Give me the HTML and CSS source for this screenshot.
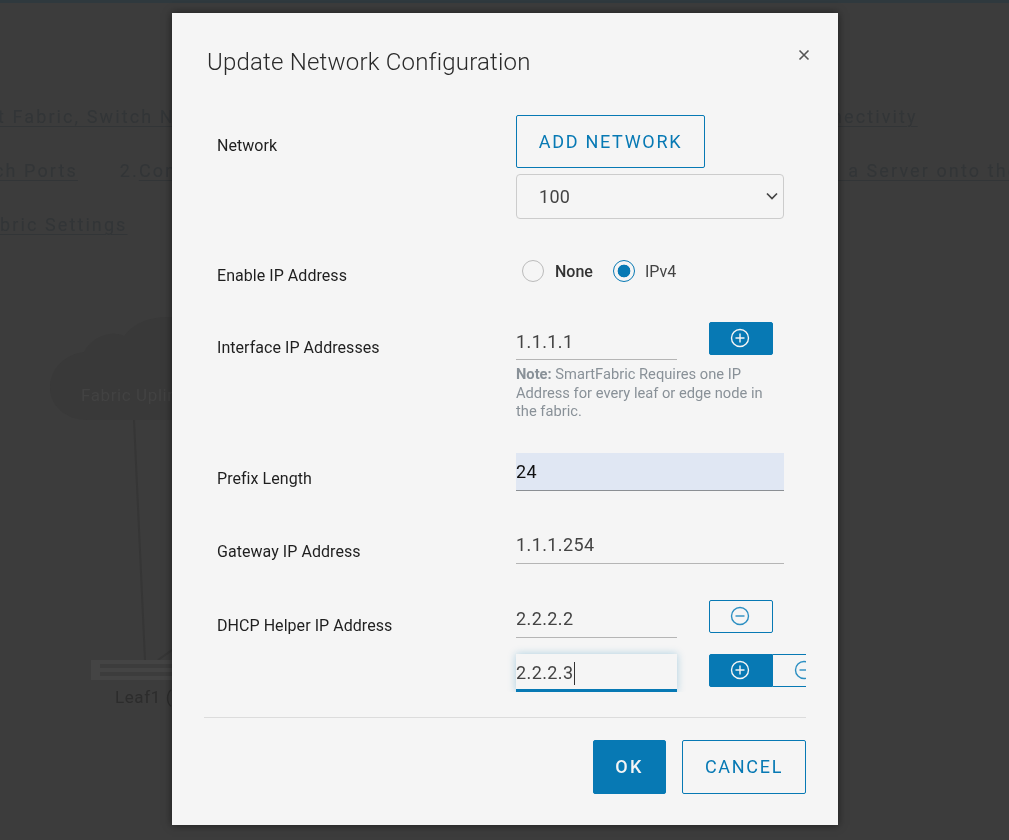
FILE: index.html
```html
<!DOCTYPE html>
<html lang="en">
<head>
<meta charset="utf-8">
<title>Update Network Configuration</title>
<link rel="stylesheet" href="styles.css">
</head>
<body>
<div class="page">
  <div class="topbar"></div>
  <div class="steps">
    <div class="step-row"><span class="step-left step-left-1"><a class="step">t Fabric, Switch Name and Connectivity</a></span><a class="step step-right-1">nectivity</a></div>
    <div class="step-row"><span class="step-left step-left-2"><a class="step">ch Ports</a><span class="step-num">2.</span><a class="step">Configure</a></span><a class="step step-right-2">&nbsp;&nbsp;a Server onto the Network</a></div>
    <div class="step-row"><span class="step-left"><a class="step">bric Settings</a></span></div>
  </div>
  <svg class="topology" width="172" height="840" viewBox="0 0 172 840" aria-hidden="true">
    <path class="cloud" d="M88 420 C64 420 50 404 50 388 C50 368 66 354 84 352 C92 336 112 330 124 336 C134 322 152 316 172 317 L172 420 Z"/>
    <path class="link" d="M134 420 L145 660"/>
    <path class="link" d="M158 660 L172 650"/>
    <rect class="switch" x="91" y="660" width="81" height="20"/>
    <path class="switch-line" d="M100 666 H172 M100 674 H172"/>
    <text class="cloud-label" x="81" y="401">Fabric Uplink</text>
    <text class="leaf-label" x="115" y="703">Leaf1 (L</text>
  </svg>

  <section class="modal">
    <header class="modal-head">
      <h1 class="modal-title">Update Network Configuration</h1>
      <svg class="close" width="12" height="12" viewBox="0 0 12 12" aria-label="Close"><path d="M1.5 1.5 L10.5 10.5 M10.5 1.5 L1.5 10.5"/></svg>
    </header>

    <form class="form">
      <div class="row row-network">
        <label class="label label-network">Network</label>
        <div class="stack-network">
          <button type="button" class="btn btn-outline btn-add-network">ADD NETWORK</button>
          <div class="select-wrap">
            <select class="select"><option>100</option></select>
            <svg class="select-arrow" width="12" height="8" viewBox="0 0 12 8"><path d="M1 1.5 L6 6.5 L11 1.5"/></svg>
          </div>
        </div>
      </div>

      <div class="row row-radio">
        <label class="label label-radio">Enable IP Address</label>
        <div class="radios">
          <label class="radio-item"><input class="radio" type="radio" name="ip"><span class="radio-none">None</span></label>
          <label class="radio-item radio-item-ip"><input class="radio" type="radio" name="ip" checked><span>IPv4</span></label>
        </div>
      </div>

      <div class="row row-interface">
        <label class="label">Interface IP Addresses</label>
        <div>
          <div class="field-line">
            <input class="input input-short" value="1.1.1.1">
            <button type="button" class="icon-btn icon-btn-solid">
              <svg class="icon" width="20" height="20" viewBox="0 0 20 20"><circle cx="10" cy="10" r="8.5"/><path d="M10 5.5 V14.5 M5.5 10 H14.5"/></svg>
            </button>
          </div>
          <p class="note"><b class="note-key">Note:</b> SmartFabric Requires one IP Address for every leaf or edge node in the fabric.</p>
        </div>
      </div>

      <div class="row row-prefix">
        <label class="label">Prefix Length</label>
        <input class="input input-long input-filled" value="24">
      </div>

      <div class="row row-gateway">
        <label class="label">Gateway IP Address</label>
        <input class="input input-long" value="1.1.1.254">
      </div>

      <div class="row row-dhcp">
        <label class="label">DHCP Helper IP Address</label>
        <div class="dhcp-stack">
          <div class="field-line">
            <input class="input input-short" value="2.2.2.2">
            <button type="button" class="icon-btn icon-btn-outline">
              <svg class="icon" width="20" height="20" viewBox="0 0 20 20"><circle cx="10" cy="10" r="8.5"/><path d="M5.5 10 H14.5"/></svg>
            </button>
          </div>
          <div class="field-line">
            <div class="input input-short input-focus">2.2.2.3<span class="caret"></span></div>
            <div class="btn-group">
              <button type="button" class="icon-btn icon-btn-solid icon-btn-first">
                <svg class="icon" width="20" height="20" viewBox="0 0 20 20"><circle cx="10" cy="10" r="8.5"/><path d="M10 5.5 V14.5 M5.5 10 H14.5"/></svg>
              </button>
              <button type="button" class="icon-btn icon-btn-outline icon-btn-last">
                <svg class="icon" width="20" height="20" viewBox="0 0 20 20"><circle cx="10" cy="10" r="8.5"/><path d="M5.5 10 H14.5"/></svg>
              </button>
            </div>
          </div>
        </div>
      </div>
    </form>

    <footer class="modal-foot">
      <button type="button" class="btn btn-solid btn-ok">OK</button>
      <button type="button" class="btn btn-outline btn-cancel">CANCEL</button>
    </footer>
  </section>
</div>
</body>
</html>
```
FILE: styles.css
```css
* { box-sizing: border-box; }
html, body { margin: 0; height: 100%; }
body { background: #3c3c3c; font-family: Roboto, "Liberation Sans", sans-serif; overflow: hidden; }

.page { position: relative; width: 1009px; height: 840px; overflow: hidden; background: #3c3c3c; filter: blur(.35px); }
.topbar { height: 3px; background: #2f393e; }

.steps { padding-top: 87px; }
.step-row { display: grid; grid-template-columns: 838px 1fr; height: 54px; line-height: 54px; font-size: 18px; letter-spacing: 2.1px; color: #323537; white-space: nowrap; overflow: hidden; }
.step { color: #323537; text-decoration: underline; text-underline-offset: 3px; text-decoration-thickness: 1px; }
.step-left { overflow: hidden; }
.step-left-1 { text-indent: -2px; }
.step-left-2 { text-indent: -6px; }
.step-right-1 { margin-left: -6px; }
.step-right-2 { margin-left: -3px; }
.step-num { margin-left: 42px; }
.topology { position: absolute; left: 0; top: 0; }
.cloud { fill: #393939; }
.link { stroke: #363636; stroke-width: 2; fill: none; }
.switch { fill: #444; }
.switch-line { stroke: #3c3c3c; stroke-width: 4; }
.cloud-label { font-size: 17px; fill: #424242; letter-spacing: .6px; }
.leaf-label { font-size: 17px; fill: #2c2c2c; letter-spacing: .6px; }

.modal { position: absolute; left: 172px; top: 13px; width: 666px; height: 812px; padding: 32px 32px 31px; background: #f5f5f5; box-shadow: 0 0 8px rgba(0,0,0,.55); display: flex; flex-direction: column; }
.modal-head { display: flex; justify-content: space-between; align-items: flex-start; height: 32px; padding-left: 3px; }
.modal-title { margin: 1px 0 0; font-size: 24px; line-height: 32px; font-weight: 300; color: #2a2a2a; letter-spacing: .2px; }
.close { margin-top: 4px; margin-right: -4px; }
.close path { stroke: #555; stroke-width: 1.6; fill: none; }

.form { margin-top: 38px; overflow: hidden; }
.row { display: grid; grid-template-columns: 312px 290px; }
.label { padding: 16px 0 0 13px; font-size: 16px; line-height: 20px; letter-spacing: .05px; color: #1f1f1f; }
.label-network { padding-top: 21px; }
.label-radio { padding-top: 6px; }
.row-radio { margin-top: 41px; }
.row-interface { margin-top: 36px; }
.row-prefix { margin-top: 32px; }
.row-gateway { margin-top: 35px; }
.row-dhcp { margin-top: 36px; }

.stack-network { display: flex; flex-direction: column; align-items: flex-start; gap: 6px; }
.btn { font-family: inherit; border-radius: 2px; font-size: 18px; cursor: pointer; }
.btn-outline { background: transparent; color: #0779b4; border: 1px solid #0779b4; letter-spacing: 1.7px; }
.btn-solid { background: #0779b4; color: #f5f5f5; border: 1px solid #0779b4; letter-spacing: 2.4px; }
.btn-add-network { width: 189px; height: 53px; padding: 0; }
.select-wrap { position: relative; }
.select { display: block; appearance: none; width: 268px; height: 45px; padding-left: 22px; background-color: #f5f5f5; border: 1px solid #ccc; border-radius: 4px; font: 18px Roboto, sans-serif; letter-spacing: .3px; color: #444; }
.select-arrow { position: absolute; right: 6px; top: 18px; }
.select-arrow path { fill: none; stroke: #444; stroke-width: 1.7; }

.radios { display: flex; height: 22px; align-items: center; padding-left: 6px; gap: 20px; }
.radio-item { display: flex; align-items: center; gap: 11px; font-size: 16px; color: #444; }
.radio-item-ip { gap: 10px; }
.radio-none { color: #333; font-weight: 500; }
.radio { appearance: none; margin: 0; width: 22px; height: 22px; border: 1px solid #bbb; border-radius: 50%; background: #f5f5f5; }
.radio:checked { border-color: #0779b4; background: radial-gradient(circle, #0779b4 0 6px, #f5f5f5 6.7px); }

.field-line { display: flex; align-items: flex-start; }
.input { display: block; flex: none; height: 38px; padding: 1px 0 0; border: 0; border-bottom: 1px solid #b5b5b5; background: transparent; font: 18px/36px Roboto, sans-serif; letter-spacing: .4px; color: #444; outline: none; }
.input-short { width: 161px; }
.input-long { width: 268px; }
.input-filled { background: #e0e7f3; color: #111; border-bottom-color: #8b8f94; }
.input-focus { background: #f5f5f5; border-bottom: 3px solid #0779b4; box-shadow: 0 0 8px rgba(7,121,180,.3); line-height: 35px; }
.caret { display: inline-block; width: 1px; height: 23px; background: #333; vertical-align: -6px; }

.icon-btn { display: flex; align-items: flex-start; justify-content: center; width: 64px; height: 33px; margin-left: 32px; padding: 5px 2px 0 0; border-radius: 2px; border: 1px solid #0779b4; flex: none; }
.icon-btn-solid { background: #0779b4; }
.icon-btn-outline { background: transparent; }
.icon { fill: none; stroke-width: 1.4; }
.icon-btn-solid .icon { stroke: #f5f5f5; }
.icon-btn-outline .icon { stroke: #2c8fc2; }
.btn-group { display: flex; margin-left: 32px; flex: none; }
.icon-btn-first { margin-left: 0; border-radius: 2px 0 0 2px; }
.icon-btn-last { margin-left: 0; border-left: 0; border-radius: 0 2px 2px 0; }

.note { margin: 5px 0 0; width: 262px; font-size: 14.7px; line-height: 18.5px; color: #899198; }
.note-key { font-weight: 700; }

.dhcp-stack { display: flex; flex-direction: column; gap: 16px; min-width: 0; }

.modal-foot { margin-top: 25px; padding-top: 22px; border-top: 1px solid #dcdcdc; display: flex; justify-content: flex-end; gap: 16px; }
.btn-ok { width: 73px; height: 54px; padding: 0; font-weight: 500; }
.btn-cancel { width: 124px; height: 54px; padding: 0; }
```
